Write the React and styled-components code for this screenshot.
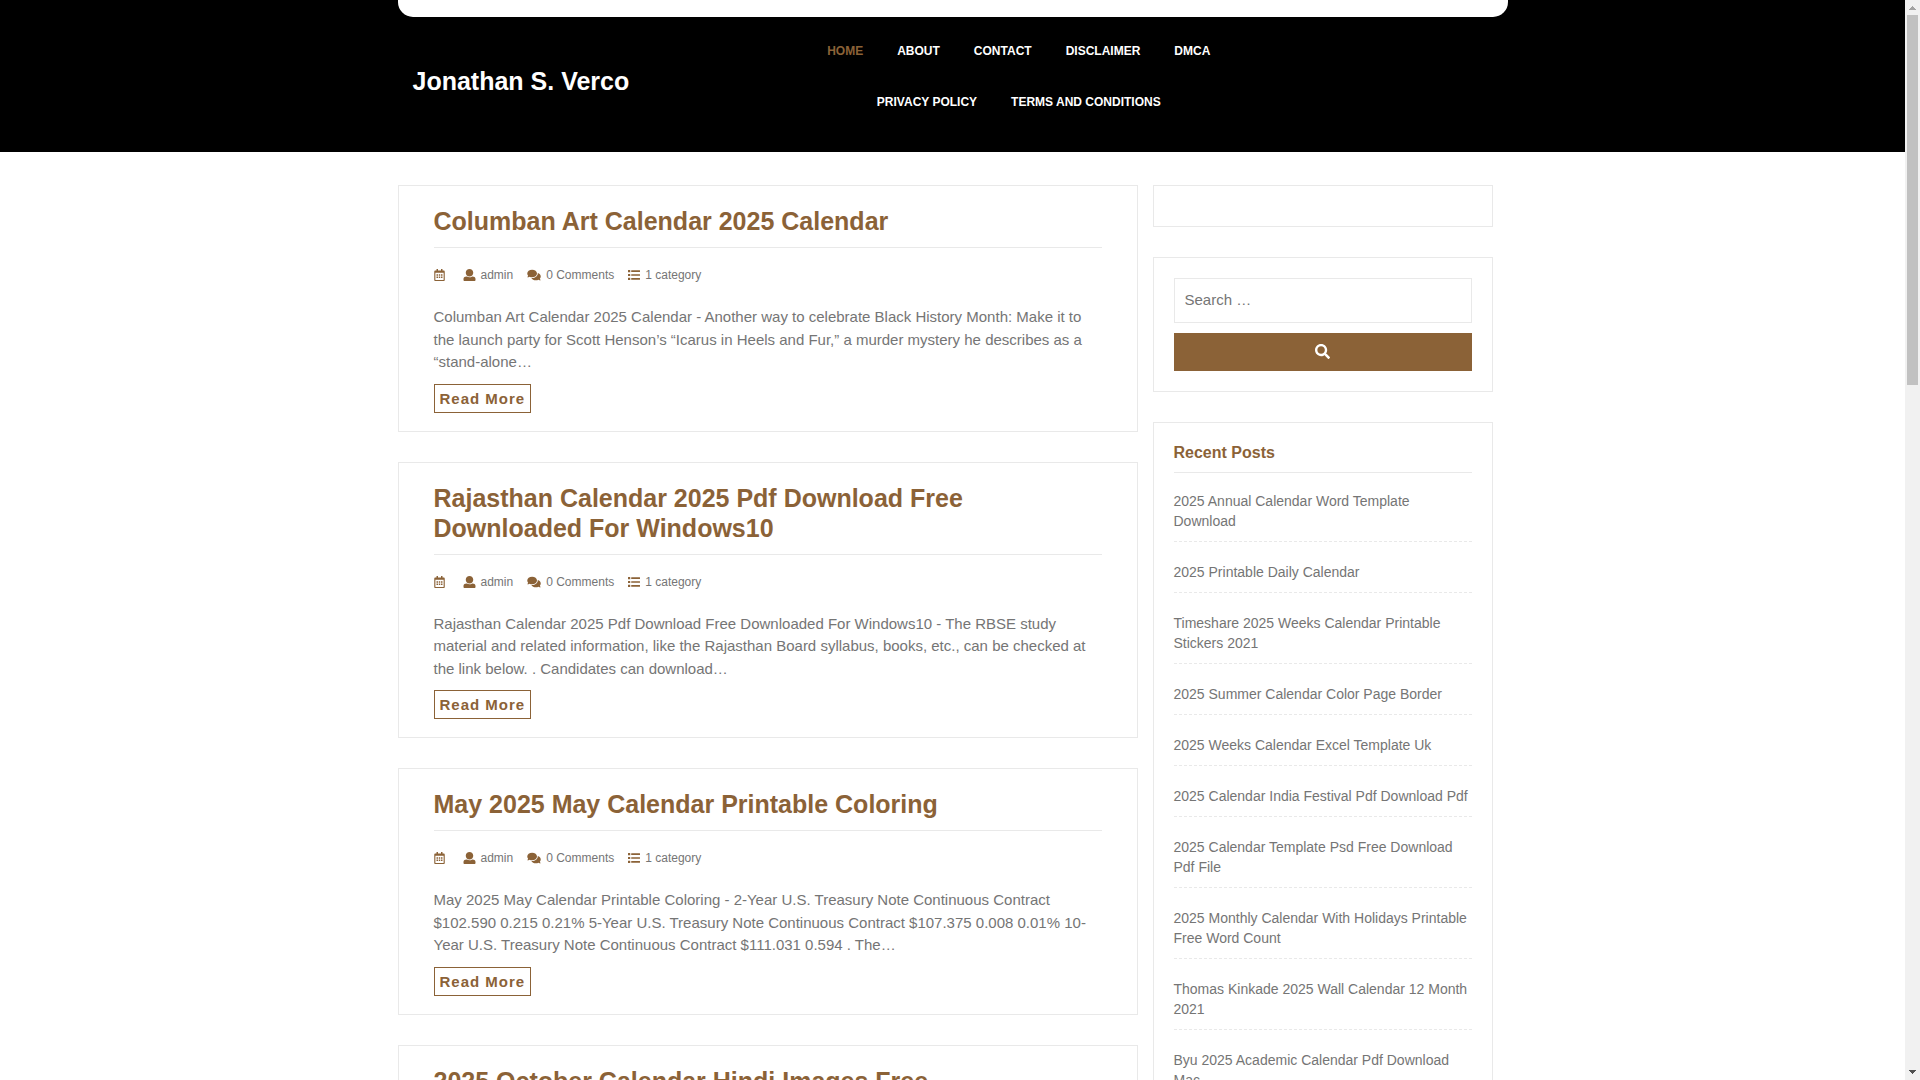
import React from "react";
import styled, { createGlobalStyle } from "styled-components";
import { FaRegCalendarAlt, FaComments, FaSearch } from "react-icons/fa";

const BROWN = "#8b6237";
const LINE = "#e9e9e9";
const GREY = "#757575";

const GlobalStyle = createGlobalStyle`
  *, *::before, *::after { box-sizing: border-box; }
  body {
    margin: 0;
    background: #fff;
    color: ${GREY};
    font-family: "Liberation Sans", Arial, Helvetica, sans-serif;
    font-size: 15px;
    line-height: 1.5;
  }
  h1, h2, h3, p, ul { margin: 0; padding: 0; }
  ul { list-style: none; }
  a { color: inherit; text-decoration: none; }
`;

const Shell = styled.div`
  display: grid;
  grid-template-columns: minmax(0, 1fr) 15px;
  height: 100vh;
  overflow: hidden;
`;

const Page = styled.div`
  overflow: hidden;
`;

const Container = styled.div`
  width: 100%;
  max-width: 1110px;
  margin: 0 auto;
`;

const Header = styled.header`
  background: #000;
`;

const TopBar = styled(Container)`
  height: 17px;
  background: #fff;
  border-radius: 0 0 15px 15px;
`;

const HeaderRow = styled(Container)`
  display: grid;
  grid-template-columns: 4fr 5fr 3fr;
  padding: 9px 0 24px;
`;

const SiteTitle = styled.h1`
  align-self: center;
  padding: 8px 0 0 15px;
  color: #fff;
  font-size: 25px;
  line-height: 30px;
`;

const Menu = styled.ul`
  display: flex;
  flex-wrap: wrap;
  justify-content: center;
  column-gap: 34px;
  margin-left: 40px;
`;

const MenuLink = styled.a`
  display: block;
  color: ${(p) => (p.$current ? BROWN : "#fff")};
  font-size: 12px;
  font-weight: bold;
  line-height: 51px;
  text-transform: uppercase;
`;

const Columns = styled(Container)`
  display: grid;
  grid-template-columns: 2fr 1fr;
  padding-top: 33px;
`;

const Stack = styled.div`
  display: flex;
  flex-direction: column;
  gap: 30px;
`;

const Sidebar = styled(Stack).attrs({ as: "aside" })`
  padding: 0 15px;
`;

const Post = styled.article`
  padding: 20px 35px 18px;
  border: 1px solid ${LINE};
`;

const PostTitle = styled.h2`
  padding-bottom: 11px;
  border-bottom: 1px solid ${LINE};
  color: ${BROWN};
  font-size: 25px;
  line-height: 30px;
`;

const Meta = styled.div`
  display: flex;
  gap: 14px;
  padding: 18px 0 22px;
  font-size: 12px;
  line-height: 18px;
`;

const MetaItem = styled.span`
  display: flex;
  align-items: center;
  gap: 5px;
  min-width: 15px;

  svg {
    flex: none;
    width: ${(p) => p.$icon}px;
    height: 12px;
    color: ${BROWN};
  }
`;

const ReadMore = styled.a`
  display: block;
  width: fit-content;
  margin-top: 10px;
  padding: 0 5px;
  border: 1px solid ${BROWN};
  color: ${BROWN};
  font-weight: bold;
  letter-spacing: 1px;
  line-height: 27px;
`;

const Widget = styled.section`
  padding: 20px;
  border: 1px solid ${LINE};
`;

const SearchForm = styled.form`
  display: grid;
  gap: 10px;
`;

const SearchInput = styled.input`
  width: 100%;
  height: 45px;
  padding: 0 10px 2px;
  border: 1px solid ${LINE};
  background: #fff;
  font: inherit;

  &::placeholder { color: ${GREY}; }
`;

const SearchButton = styled.button`
  display: flex;
  align-items: center;
  justify-content: center;
  height: 38px;
  padding: 0 0 2px;
  border: 0;
  background: ${BROWN};
  color: #fff;
  font-size: 15px;
`;

const WidgetTitle = styled.h3`
  padding-bottom: 9px;
  border-bottom: 1px solid ${LINE};
  color: ${BROWN};
  font-size: 16px;
  line-height: 20px;
`;

const RecentList = styled.ul`
  display: grid;
  gap: 20px;
  padding-top: 18px;
`;

const RecentItem = styled.li`
  padding-bottom: 10px;
  border-bottom: 1px dashed ${LINE};
  font-size: 14px;
  line-height: 20px;
`;

const ScrollTrack = styled.div`
  display: flex;
  flex-direction: column;
  align-items: center;
  background: #f1f1f1;
`;

const ScrollThumb = styled.div`
  flex: 0 0 370px;
  width: 11px;
  background: #c1c1c1;
`;

const ScrollArrow = styled.svg`
  display: block;
  flex: none;
  width: 15px;
  height: 15px;
  margin-top: ${(p) => (p.$end ? "auto" : "0")};
  fill: ${(p) => (p.$end ? "#505050" : "#a3a3a3")};
`;

const UserIcon = () => (
  <svg viewBox="0 0 512 512" fill="currentColor" aria-hidden="true">
    <path d="M256 0c88.366 0 160 71.634 160 160s-71.634 160-160 160S96 248.366 96 160 167.634 0 256 0zm183.283 333.821l-71.313-17.828c-74.923 53.89-165.738 41.864-223.94 0l-71.313 17.828C29.981 344.505 0 382.903 0 426.955V464c0 26.51 21.49 48 48 48h416c26.51 0 48-21.49 48-48v-37.045c0-44.052-29.981-82.45-72.717-93.134z" />
  </svg>
);

const ListIcon = () => (
  <svg viewBox="0 0 512 512" fill="currentColor" aria-hidden="true">
    <rect x="0" y="46" width="96" height="90" rx="12" />
    <rect x="0" y="211" width="96" height="90" rx="12" />
    <rect x="0" y="376" width="96" height="90" rx="12" />
    <rect x="136" y="55" width="376" height="72" rx="12" />
    <rect x="136" y="220" width="376" height="72" rx="12" />
    <rect x="136" y="385" width="376" height="72" rx="12" />
  </svg>
);

const menu = ["Home", "About", "Contact", "Disclaimer", "DMCA", "Privacy Policy", "Terms and Conditions"];

const posts = [
  {
    title: "Columban Art Calendar 2025 Calendar",
    text: "Columban Art Calendar 2025 Calendar - Another way to celebrate Black History Month: Make it to the launch party for Scott Henson’s “Icarus in Heels and Fur,” a murder mystery he describes as a “stand-alone…",
  },
  {
    title: "Rajasthan Calendar 2025 Pdf Download Free Downloaded For Windows10",
    text: "Rajasthan Calendar 2025 Pdf Download Free Downloaded For Windows10 - The RBSE study material and related information, like the Rajasthan Board syllabus, books, etc., can be checked at the link below. . Candidates can download…",
  },
  {
    title: "May 2025 May Calendar Printable Coloring",
    text: "May 2025 May Calendar Printable Coloring - 2-Year U.S. Treasury Note Continuous Contract $102.590 0.215 0.21% 5-Year U.S. Treasury Note Continuous Contract $107.375 0.008 0.01% 10-Year U.S. Treasury Note Continuous Contract $111.031 0.594 . The…",
  },
  { title: "2025 October Calendar Hindi Images Free", text: "" },
];

const recent = [
  "2025 Annual Calendar Word Template Download",
  "2025 Printable Daily Calendar",
  "Timeshare 2025 Weeks Calendar Printable Stickers 2021",
  "2025 Summer Calendar Color Page Border",
  "2025 Weeks Calendar Excel Template Uk",
  "2025 Calendar India Festival Pdf Download Pdf",
  "2025 Calendar Template Psd Free Download Pdf File",
  "2025 Monthly Calendar With Holidays Printable Free Word Count",
  "Thomas Kinkade 2025 Wall Calendar 12 Month 2021",
  "Byu 2025 Academic Calendar Pdf Download Mac",
];

export default function App() {
  return (
    <>
      <GlobalStyle />
      <Shell>
        <Page>
          <Header>
            <TopBar />
            <HeaderRow>
              <SiteTitle><a href="#home">Jonathan S. Verco</a></SiteTitle>
              <nav>
                <Menu>
                  {menu.map((label, i) => (
                    <li key={label}><MenuLink href="#page" $current={i === 0}>{label}</MenuLink></li>
                  ))}
                </Menu>
              </nav>
            </HeaderRow>
          </Header>
          <Columns>
            <Stack as="main">
              {posts.map((post) => (
                <Post key={post.title}>
                  <PostTitle><a href="#post">{post.title}</a></PostTitle>
                  {post.text && (
                    <>
                      <Meta>
                        <MetaItem $icon={11}><FaRegCalendarAlt /></MetaItem>
                        <MetaItem $icon={13}><UserIcon /><a href="#author">admin</a></MetaItem>
                        <MetaItem $icon={14}><FaComments />0 Comments</MetaItem>
                        <MetaItem $icon={12}><ListIcon />1 category</MetaItem>
                      </Meta>
                      <p>{post.text}</p>
                      <ReadMore href="#post">Read More</ReadMore>
                    </>
                  )}
                </Post>
              ))}
            </Stack>
            <Sidebar>
              <Widget />
              <Widget>
                <SearchForm>
                  <SearchInput type="search" placeholder="Search …" aria-label="Search for:" />
                  <SearchButton type="button" aria-label="Search"><FaSearch /></SearchButton>
                </SearchForm>
              </Widget>
              <Widget>
                <WidgetTitle>Recent Posts</WidgetTitle>
                <RecentList>
                  {recent.map((title) => (
                    <RecentItem key={title}><a href="#post">{title}</a></RecentItem>
                  ))}
                </RecentList>
              </Widget>
            </Sidebar>
          </Columns>
        </Page>
        <ScrollTrack aria-hidden="true">
          <ScrollArrow viewBox="0 0 15 15"><path d="M7 6h1v1h1v1h1v1h1v1H4V9h1V8h1V7h1z" /></ScrollArrow>
          <ScrollThumb />
          <ScrollArrow $end viewBox="0 0 15 15"><path d="M4 5h7v1h-1v1H9v1H8v1H7V8H6V7H5V6H4z" /></ScrollArrow>
        </ScrollTrack>
      </Shell>
    </>
  );
}
